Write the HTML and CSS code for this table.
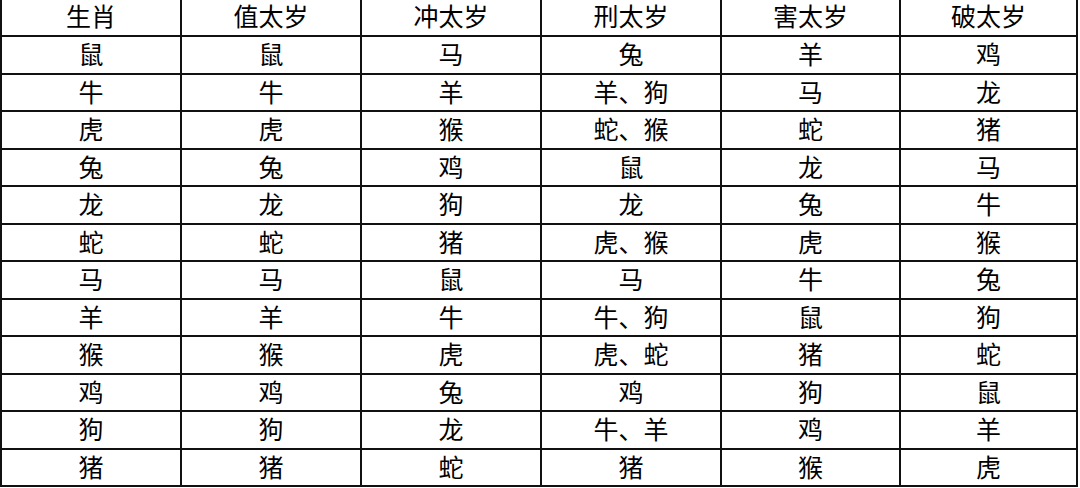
FILE: index.html
```html
<!DOCTYPE html>
<html lang="zh-CN">
<head>
<meta charset="utf-8">
<title>生肖太岁表</title>
<link rel="stylesheet" href="styles.css">
</head>
<body>
<div class="table">
  <div class="cell head first">生肖</div><div class="cell head">值太岁</div><div class="cell head">冲太岁</div><div class="cell head">刑太岁</div><div class="cell head">害太岁</div><div class="cell head">破太岁</div>
  <div class="cell first">鼠</div><div class="cell">鼠</div><div class="cell">马</div><div class="cell">兔</div><div class="cell">羊</div><div class="cell">鸡</div>
  <div class="cell first">牛</div><div class="cell">牛</div><div class="cell">羊</div><div class="cell">羊、狗</div><div class="cell">马</div><div class="cell">龙</div>
  <div class="cell first">虎</div><div class="cell">虎</div><div class="cell">猴</div><div class="cell">蛇、猴</div><div class="cell">蛇</div><div class="cell">猪</div>
  <div class="cell first">兔</div><div class="cell">兔</div><div class="cell">鸡</div><div class="cell">鼠</div><div class="cell">龙</div><div class="cell">马</div>
  <div class="cell first">龙</div><div class="cell">龙</div><div class="cell">狗</div><div class="cell">龙</div><div class="cell">兔</div><div class="cell">牛</div>
  <div class="cell first">蛇</div><div class="cell">蛇</div><div class="cell">猪</div><div class="cell">虎、猴</div><div class="cell">虎</div><div class="cell">猴</div>
  <div class="cell first">马</div><div class="cell">马</div><div class="cell">鼠</div><div class="cell">马</div><div class="cell">牛</div><div class="cell">兔</div>
  <div class="cell first">羊</div><div class="cell">羊</div><div class="cell">牛</div><div class="cell">牛、狗</div><div class="cell">鼠</div><div class="cell">狗</div>
  <div class="cell first">猴</div><div class="cell">猴</div><div class="cell">虎</div><div class="cell">虎、蛇</div><div class="cell">猪</div><div class="cell">蛇</div>
  <div class="cell first">鸡</div><div class="cell">鸡</div><div class="cell">兔</div><div class="cell">鸡</div><div class="cell">狗</div><div class="cell">鼠</div>
  <div class="cell first">狗</div><div class="cell">狗</div><div class="cell">龙</div><div class="cell">牛、羊</div><div class="cell">鸡</div><div class="cell">羊</div>
  <div class="cell first">猪</div><div class="cell">猪</div><div class="cell">蛇</div><div class="cell">猪</div><div class="cell">猴</div><div class="cell">虎</div>
</div>
</body>
</html>
```

FILE: styles.css
```css
html, body {
  margin: 0;
  padding: 0;
  background: #ffffff;
}

.table {
  display: grid;
  grid-template-columns: 182px 180px 180px 180px 179px 177px;
  grid-template-rows: 37px repeat(12, 37.5px);
  width: 1078px;
  font-family: "Liberation Sans", "Noto Sans CJK SC", sans-serif;
  font-size: 25px;
  color: #000000;
}

.cell {
  box-sizing: border-box;
  display: flex;
  align-items: center;
  justify-content: center;
  padding-top: 2px;
  border-right: 2px solid #111111;
  border-bottom: 2px solid #111111;
  line-height: 1;
  white-space: nowrap;
}

.cell.first {
  border-left: 2px solid #111111;
}

.cell.head {
  padding-top: 0;
}
```
